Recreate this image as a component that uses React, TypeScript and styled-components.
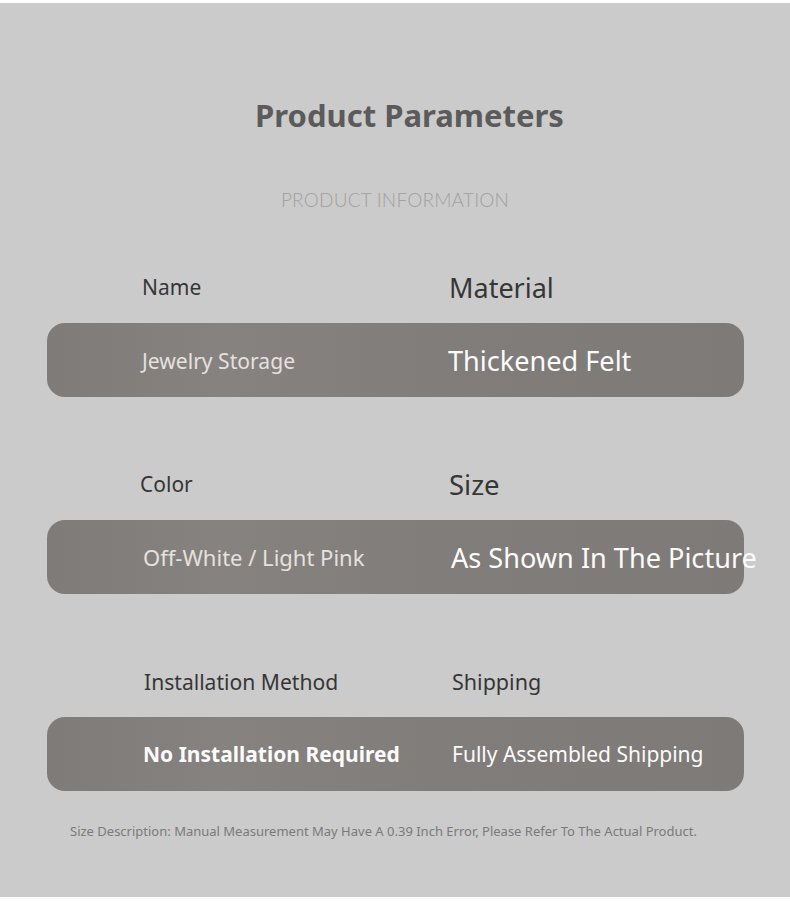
import styled, { createGlobalStyle } from 'styled-components';

const GlobalStyle = createGlobalStyle`
  body {
    margin: 0;
    background: #ffffff;
    font-family: 'Noto Sans', 'Open Sans', sans-serif;
  }
`;

interface Param {
  label: string;
  value: string;
  labelSize: number;
  valueSize: number;
  labelIndent?: number;
  valueIndent?: number;
  bold?: boolean;
}

const ROWS: [Param, Param][] = [
  [
    { label: 'Name', value: 'Jewelry Storage', labelSize: 21, valueSize: 21.1 },
    { label: 'Material', value: 'Thickened Felt', labelSize: 27, valueSize: 27.1 },
  ],
  [
    {
      label: 'Color',
      value: 'Off-White / Light Pink',
      labelSize: 21,
      valueSize: 22,
      labelIndent: -2,
      valueIndent: 1,
    },
    {
      label: 'Size',
      value: 'As Shown In The Picture',
      labelSize: 27.5,
      valueSize: 27.1,
      valueIndent: 3,
    },
  ],
  [
    {
      label: 'Installation Method',
      value: 'No Installation Required',
      labelSize: 21.1,
      valueSize: 21,
      labelIndent: 2,
      valueIndent: 1,
      bold: true,
    },
    {
      label: 'Shipping',
      value: 'Fully Assembled Shipping',
      labelSize: 21.5,
      valueSize: 21,
      labelIndent: 3,
      valueIndent: 4,
    },
  ],
];

function App() {
  return (
    <>
      <GlobalStyle />
      <Page>
        <Panel>
          <Title>Product Parameters</Title>
          <Subtitle>PRODUCT INFORMATION</Subtitle>
          <Table>
            {ROWS.map((row, i) => (
              <Section key={i}>
                <LabelRow>
                  {row.map((p) => (
                    <Label key={p.label} size={p.labelSize} indent={p.labelIndent}>
                      {p.label}
                    </Label>
                  ))}
                </LabelRow>
                <ValueBar>
                  {row.map((p, j) => (
                    <Value
                      key={p.value}
                      size={p.valueSize}
                      indent={p.valueIndent}
                      bold={p.bold}
                      dim={j === 0 && !p.bold}
                    >
                      {p.value}
                    </Value>
                  ))}
                </ValueBar>
              </Section>
            ))}
          </Table>
          <Note>
            Size Description: Manual Measurement May Have A 0.39 Inch Error,
            Please Refer To The Actual Product.
          </Note>
        </Panel>
      </Page>
    </>
  );
}

const Page = styled.div`
  width: 790px;
  height: 902px;
  padding-top: 3px;
  box-sizing: border-box;
  overflow: hidden;
`;

const Panel = styled.main`
  height: 894px;
  background: #cbcbcb;
  padding-top: 92px;
  box-sizing: border-box;
  display: flex;
  flex-direction: column;
`;

const Title = styled.h1`
  margin: 0 0 0 29px;
  height: 40px;
  line-height: 40px;
  text-align: center;
  font-size: 31px;
  font-weight: 700;
  color: #5b5b5b;
`;

const Subtitle = styled.div`
  margin: 55px 0 0 0;
  height: 20px;
  line-height: 20px;
  text-align: center;
  font-family: 'Lato', sans-serif;
  font-size: 19px;
  font-weight: 300;
  letter-spacing: 0.2px;
  color: #a1a1a1;
`;

const Table = styled.div`
  margin-top: 41px;
  padding: 0 46px 0 47px;
  display: flex;
  flex-direction: column;
  gap: 51px;
`;

const Section = styled.section`
  display: flex;
  flex-direction: column;
`;

const LabelRow = styled.div`
  height: 72px;
  display: grid;
  grid-template-columns: 307px 1fr;
  align-items: center;
  padding-left: 95px;
`;

const Label = styled.span.withConfig({
  shouldForwardProp: (prop) => !['size', 'indent'].includes(prop),
})<{ size: number; indent?: number }>`
  margin-left: ${(p) => p.indent ?? 0}px;
  font-size: ${(p) => p.size}px;
  color: #363636;
  white-space: nowrap;
`;

const ValueBar = styled.div`
  height: 74px;
  border-radius: 18px;
  background: linear-gradient(
    90deg,
    #7f7b79 0%,
    #868280 25%,
    #817d7b 55%,
    #7e7a78 100%
  );
  display: grid;
  grid-template-columns: 306px 1fr;
  align-items: center;
  padding-left: 95px;
`;

const Value = styled.span.withConfig({
  shouldForwardProp: (prop) => !['size', 'bold', 'dim', 'indent'].includes(prop),
})<{ size: number; bold?: boolean; dim?: boolean; indent?: number }>`
  margin-left: ${(p) => p.indent ?? 0}px;
  font-size: ${(p) => p.size}px;
  font-weight: ${(p) => (p.bold ? 700 : 400)};
  color: ${(p) => (p.dim ? '#e6e1de' : '#fbfbfb')};
  white-space: nowrap;
`;

const Note = styled.p`
  margin: 30px 0 0 0;
  padding-left: 70px;
  font-size: 13px;
  line-height: 20px;
  color: #7a7a7a;
`;

export default App;
